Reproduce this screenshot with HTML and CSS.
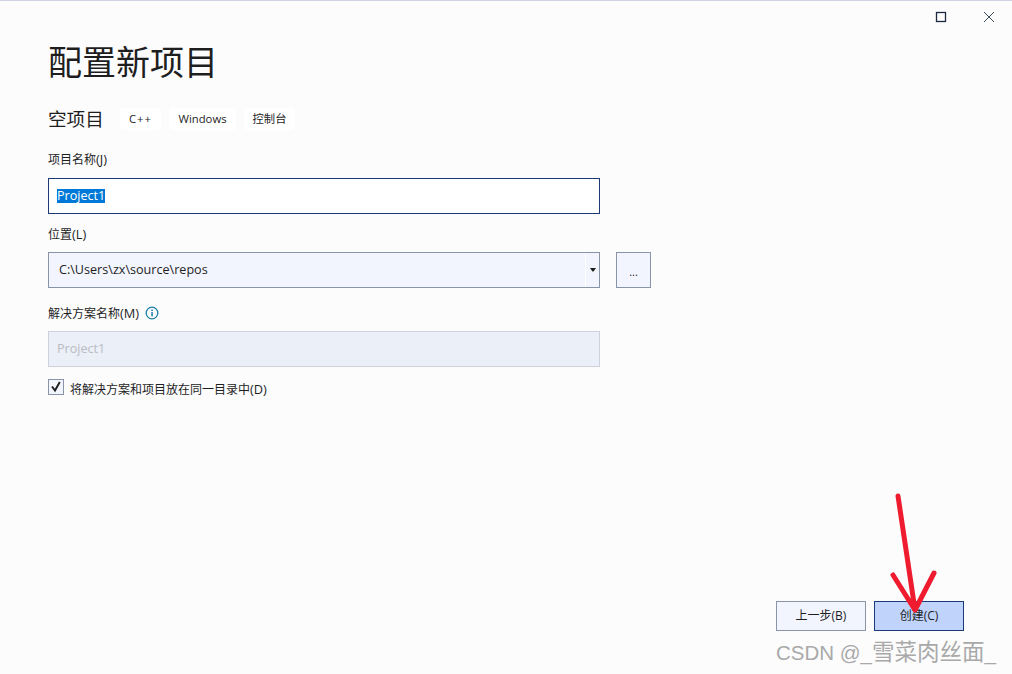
FILE: index.html
```html
<!DOCTYPE html>
<html lang="zh">
<head>
<meta charset="utf-8">
<title>配置新项目</title>
<link rel="stylesheet" href="styles.css">
</head>
<body>
<div class="window">
  <div class="titlebar">
    <button class="winbtn" aria-label="最大化"><svg width="12" height="12" viewBox="0 0 12 12"><rect x="1.5" y="1.5" width="9" height="9" fill="none" stroke="#1b2a41" stroke-width="1.3"/></svg></button>
    <button class="winbtn" aria-label="关闭"><svg width="12" height="12" viewBox="0 0 12 12"><path d="M1 1L11 11M11 1L1 11" fill="none" stroke="#3c4a5e" stroke-width="1"/></svg></button>
  </div>
  <main class="content">
    <h1 class="title">配置新项目</h1>
    <div class="subhead">
      <h2 class="template">空项目</h2>
      <ul class="chips">
        <li class="chip chip-lang">C++</li>
        <li class="chip chip-os">Windows</li>
        <li class="chip chip-type">控制台</li>
      </ul>
    </div>
    <label class="label label-name">项目名称<span class="key">(J)</span></label>
    <div class="input input-focus"><span class="selected">Project1</span></div>
    <label class="label label-loc">位置<span class="key">(L)</span></label>
    <div class="location">
      <div class="input input-combo">
        <span class="combo-text">C:\Users\zx\source\repos</span>
        <span class="combo-arrow"><svg width="6" height="4" viewBox="0 0 6 4"><path d="M0 0H6L3.5 3.6H2.5Z" fill="#1e1e1e"/></svg></span>
      </div>
      <button class="browse">...</button>
    </div>
    <div class="label label-sol"><span>解决方案名称<span class="key">(M)</span></span>
      <svg class="info" width="14" height="14" viewBox="0 0 14 14"><circle cx="7" cy="7" r="5.8" fill="none" stroke="#1a7fa8" stroke-width="1.3"/><rect x="6.3" y="6" width="1.5" height="4.4" fill="#1a7fa8"/><rect x="6.3" y="3.5" width="1.5" height="1.5" fill="#1a7fa8"/></svg>
    </div>
    <div class="input input-disabled">Project1</div>
    <div class="check-row">
      <span class="check"><svg width="14" height="14" viewBox="0 0 14 14"><path d="M3 6.5L6 10.5L10.8 2" fill="none" stroke="#1e1e1e" stroke-width="1.9"/></svg></span>
      <span class="check-label">将解决方案和项目放在同一目录中<span class="key">(D)</span></span>
    </div>
  </main>
  <footer class="footer">
    <button class="btn">上一步(B)</button>
    <button class="btn btn-primary">创建(C)</button>
  </footer>
  <svg class="arrow" width="60" height="130" viewBox="0 0 60 130"><path d="M10 6L27 120M5 85L27 120M46 83L27 120" fill="none" stroke="#ee1c2e" stroke-width="5" stroke-linecap="round" stroke-linejoin="round"/></svg>
  <div class="watermark">CSDN @_<span class="watermark-cjk">雪菜肉丝面</span>_</div>
</div>
</body>
</html>
```
FILE: styles.css
```css
* { box-sizing: border-box; }
html, body { margin: 0; padding: 0; }
body { font-family: "Noto Sans CJK SC", "Liberation Sans", sans-serif; color: #1e1e1e; background: #fcfcfd; }
.window { position: relative; width: 1012px; height: 674px; display: flex; flex-direction: column; border-top: 1px solid #cfd3e4; background: #fcfcfd; overflow: hidden; }
.titlebar { display: flex; justify-content: flex-end; height: 30px; padding: 10px 17px 0 0; gap: 36px; flex: none; }
.winbtn { width: 12px; height: 12px; padding: 0; border: 0; background: none; display: block; }
.winbtn svg { display: block; }
.content { flex: 1; padding: 0 0 0 48px; font-family: "Open Sans", "Noto Sans CJK SC", sans-serif; }
.title { margin: 8px 0 0; font: 400 34px/44px "Noto Sans CJK SC", sans-serif; color: #1e1e1e; }
.subhead { display: flex; align-items: center; margin-top: 25px; height: 22px; }
.template { margin: 0 0 2px; width: 72px; font: 400 18.6px/22px "Noto Sans CJK SC", sans-serif; }
.chips { display: flex; gap: 8px; list-style: none; margin: 0; padding: 0; }
.chip { height: 22px; background: #fff; border-radius: 4px; text-align: center; font: 11.3px/22px "Open Sans", "Noto Sans CJK SC", sans-serif; }
.chip-lang { width: 41px; letter-spacing: 1px; }
.chip-os { width: 67px; }
.chip-type { width: 51px; }
.label { display: block; height: 16px; font: 12px/16px "Open Sans", "Noto Sans CJK SC", sans-serif; }
.key { font-size: 12.8px; }
.label-name { margin-top: 21px; }
.input { width: 552px; height: 36px; border: 1px solid #8a94a9; font: 12.6px/34px "Open Sans", "Noto Sans CJK SC", sans-serif; }
.input-focus { margin-top: 11px; border: 1px solid #1c3a78; background: #fff; padding-left: 8px; }
.selected { display: inline-block; background: #0078d7; color: #fff; line-height: 14px; vertical-align: 0; }
.label-loc { margin-top: 12px; }
.location { display: flex; gap: 16px; margin-top: 10px; }
.input-combo { display: flex; justify-content: space-between; background: #f2f5fe; padding-left: 10px; }
.combo-arrow { width: 14px; border-left: 1px solid #fff; display: flex; align-items: center; justify-content: center; }
.browse { width: 35px; height: 36px; padding: 4px 0 0; border: 1px solid #8a94a9; background: #f2f5fe; color: #1e1e1e; font: 11px/28px "Open Sans", sans-serif; }
.label-sol { display: flex; align-items: center; gap: 6px; margin-top: 17px; }
.info { flex: none; }
.input-disabled { margin-top: 10px; background: #ebeff7; border-color: #ccd1dd; color: #b9bcc2; padding-left: 8px; }
.check-row { display: flex; align-items: flex-start; gap: 6px; margin-top: 12px; }
.check { width: 16px; height: 16px; border: 1px solid #8a94a9; background: #f2f5fe; display: block; }
.check svg { display: block; }
.check-label { margin-top: 2px; font: 12px/16px "Open Sans", "Noto Sans CJK SC", sans-serif; }
.footer { flex: none; display: flex; justify-content: flex-end; gap: 8px; padding: 0 48px 43px 0; }
.btn { width: 90px; height: 30px; padding: 0; border: 1px solid #8a94a9; background: #f2f5fe; color: #1e1e1e; font: 12px/28px "Open Sans", "Noto Sans CJK SC", sans-serif; }
.btn-primary { background: #c0d3fb; border-color: #1c3a78; }
.arrow { position: absolute; left: 888px; top: 489px; }
.watermark { position: absolute; left: 776px; top: 639px; font: 20.5px/26px "Liberation Sans", "Noto Sans CJK SC", sans-serif; color: #a9a9a9; white-space: nowrap; }
.watermark-cjk { font-size: 22.5px; }
```
